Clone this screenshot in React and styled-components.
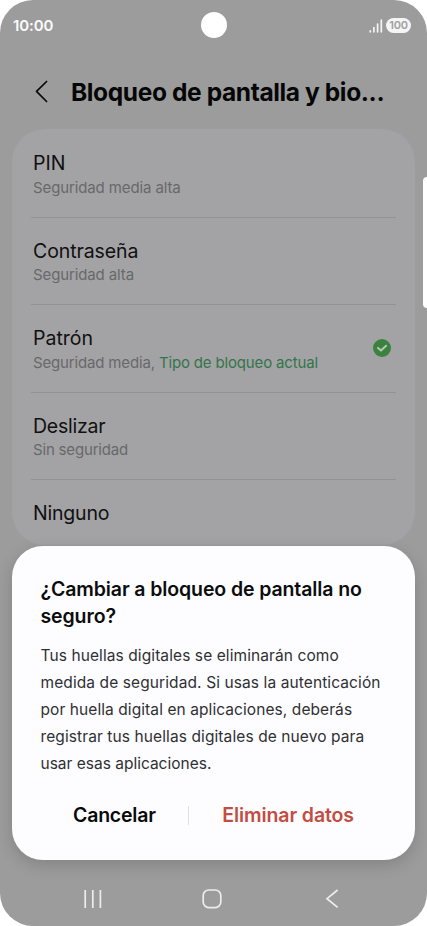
import styled, { createGlobalStyle } from "styled-components";

const options = [
  { name: "PIN", detail: "Seguridad media alta", nameTrack: 0, track: -0.12 },
  { name: "Contraseña", detail: "Seguridad alta", nameTrack: -0.1, track: -0.12 },
  {
    name: "Patrón",
    detail: "Seguridad media, ",
    current: "Tipo de bloqueo actual",
    nameTrack: 0,
    track: -0.16,
  },
  { name: "Deslizar", detail: "Sin seguridad", nameTrack: -0.25, track: -0.18 },
  { name: "Ninguno", nameTrack: -0.2 },
];

const message = [
  { text: "Tus huellas digitales se eliminarán como", track: 0.09 },
  { text: "medida de seguridad. Si usas la autenticación", track: 0.1 },
  { text: "por huella digital en aplicaciones, deberás", track: 0.08 },
  { text: "registrar tus huellas digitales de nuevo para", track: 0.1 },
  { text: "usar esas aplicaciones.", track: 0 },
];

export default function App() {
  return (
    <>
      <GlobalStyle />
      <Phone>
        <StatusBar>
          <Time>10:00</Time>
          <Camera />
          <StatusIcons>
            <svg width="14" height="14" viewBox="0 0 14 14">
              <path
                d="M1.3 11.8v1M4.9 8.6v4.2M8.6 5.2v7.6M12.3 1.2v11.6"
                stroke="#f5f5f5"
                strokeWidth="1.7"
                strokeLinecap="round"
              />
            </svg>
            <Battery>100</Battery>
          </StatusIcons>
        </StatusBar>
        <Header>
          <svg width="14" height="24" viewBox="0 0 14 24" fill="none">
            <path
              d="M11.6 1.5L1.5 11.4L11.6 21.5"
              stroke="#090909"
              strokeWidth="1.7"
              strokeLinecap="round"
              strokeLinejoin="round"
            />
          </svg>
          <Title>Bloqueo de pantalla y bio...</Title>
        </Header>
        <List>
          {options.map((option) => (
            <Row key={option.name}>
              <div>
                <Name $track={option.nameTrack}>{option.name}</Name>
                {option.detail && (
                  <Detail $track={option.track}>
                    {option.detail}
                    {option.current && <Current>{option.current}</Current>}
                  </Detail>
                )}
              </div>
              {option.current && (
                <svg width="18" height="18" viewBox="0 0 18 18" fill="none">
                  <circle cx="9" cy="9" r="9" fill="#3b823f" />
                  <path
                    d="M5 8.9L8 11.6L13.1 6.8"
                    stroke="#b2c6b4"
                    strokeWidth="2"
                    strokeLinecap="round"
                    strokeLinejoin="round"
                  />
                </svg>
              )}
            </Row>
          ))}
        </List>
        <Dialog>
          <Question>
            ¿Cambiar a bloqueo de pantalla no
            <br />
            seguro?
          </Question>
          <Message>
            {message.map((line) => (
              <Line key={line.text} $track={line.track}>
                {line.text}
              </Line>
            ))}
          </Message>
          <Actions>
            <Action $width={148}>Cancelar</Action>
            <Divider />
            <Action $width={198} $danger>
              Eliminar datos
            </Action>
          </Actions>
        </Dialog>
        <NavBar>
          <svg width="20" height="20" viewBox="0 0 20 20">
            <path d="M2.2 1v18M9.8 1v18M17.4 1v18" stroke="#ededed" strokeWidth="1.7" />
          </svg>
          <svg width="20" height="20" viewBox="0 0 20 20" fill="none">
            <rect
              x="1.2"
              y="1"
              width="17.6"
              height="17.6"
              rx="5.6"
              stroke="#ededed"
              strokeWidth="1.7"
            />
          </svg>
          <svg width="20" height="20" viewBox="0 0 20 20" fill="none">
            <path d="M16.6 1L6 9.7L16.6 18.4" stroke="#ededed" strokeWidth="1.7" />
          </svg>
        </NavBar>
        <EdgeHandle />
      </Phone>
    </>
  );
}

const GlobalStyle = createGlobalStyle`
  * {
    box-sizing: border-box;
  }
  body {
    margin: 0;
    background: #ffffff;
    font-family: "Inter", "Liberation Sans", sans-serif;
  }
  svg {
    display: block;
    flex: none;
  }
  h1, h2, p {
    margin: 0;
  }
`;

const Phone = styled.div`
  position: relative;
  display: flex;
  flex-direction: column;
  width: 427px;
  height: 926px;
  overflow: hidden;
  border-radius: 33px;
  background: #9c9c9c;
`;

const StatusBar = styled.div`
  display: grid;
  grid-template-columns: 1fr 27px 1fr;
  align-items: center;
  height: 50px;
  padding: 1px 16px 0 13px;
`;

const Time = styled.span`
  font-size: 15px;
  font-weight: 600;
  letter-spacing: -0.1px;
  color: #fafafa;
`;

const Camera = styled.span`
  width: 26px;
  height: 26px;
  margin: 0 0 1px 2px;
  border-radius: 50%;
  background: #ffffff;
`;

const StatusIcons = styled.div`
  display: flex;
  justify-content: flex-end;
  align-items: center;
  gap: 3px;
`;

const Battery = styled.span`
  width: 25px;
  height: 15px;
  border-radius: 8px;
  background: #f5f5f5;
  color: #a0a0a0;
  font-size: 11px;
  font-weight: 600;
  line-height: 15px;
  text-align: center;
  letter-spacing: -0.2px;
`;

const Header = styled.header`
  display: flex;
  align-items: center;
  gap: 22px;
  height: 79px;
  padding: 4px 0 0 35px;
`;

const Title = styled.h1`
  padding-top: 1px;
  font-size: 24.5px;
  font-weight: 700;
  letter-spacing: -0.38px;
  white-space: nowrap;
  color: #060606;
`;

const List = styled.div`
  flex: none;
  width: 403px;
  height: 416px;
  margin-left: 12px;
  padding: 1px 19px 0;
  border-radius: 33px;
  background: #a3a3a5;
`;

const Row = styled.div`
  display: flex;
  justify-content: space-between;
  height: 87.5px;
  padding: 20px 5px 0 2px;
  border-bottom: 1px solid #939395;

  svg {
    margin-top: 14px;
  }
  &:last-child {
    height: 65px;
    border-bottom: 0;
  }
`;

const Name = styled.div`
  font-size: 19.5px;
  line-height: 26px;
  letter-spacing: ${(props) => props.$track}px;
  color: #101011;
`;

const Detail = styled.div`
  margin-top: -0.5px;
  font-size: 15px;
  line-height: 23px;
  letter-spacing: ${(props) => props.$track}px;
  white-space: nowrap;
  color: #68686a;
`;

const Current = styled.span`
  color: #34744a;
`;

const Dialog = styled.section`
  flex: none;
  width: 403px;
  height: 313.5px;
  margin: 1px 0 0 12px;
  padding: 30px 28px 0 28.5px;
  border-radius: 31px;
  background: #fdfdff;
  box-shadow: 0 5px 16px rgba(0, 0, 0, 0.16);
`;

const Question = styled.h2`
  font-size: 19.5px;
  font-weight: 600;
  line-height: 27px;
  letter-spacing: -0.11px;
  white-space: nowrap;
  color: #0c0c0d;
`;

const Message = styled.p`
  display: flex;
  flex-direction: column;
  margin-top: 12px;
  font-size: 15.5px;
  line-height: 27px;
  white-space: nowrap;
  color: #303033;
`;

const Line = styled.span`
  letter-spacing: ${(props) => props.$track}px;
`;

const Actions = styled.div`
  display: flex;
  align-items: center;
  height: 28px;
  margin-top: 24px;
`;

const Action = styled.button`
  width: ${(props) => props.$width}px;
  padding: 0;
  border: 0;
  background: none;
  font-family: inherit;
  font-size: 19.5px;
  font-weight: 600;
  letter-spacing: ${(props) => (props.$danger ? "-0.1px" : "-0.2px")};
  white-space: nowrap;
  color: ${(props) => (props.$danger ? "#c24d42" : "#09090a")};
`;

const Divider = styled.span`
  width: 1px;
  height: 19px;
  background: #e1e1e4;
`;

const NavBar = styled.nav`
  display: flex;
  justify-content: space-between;
  padding: 29px 86px 0 83px;
`;

/* pull tab that sits over the right edge of the screen */
const EdgeHandle = styled.span`
  position: absolute;
  top: 177px;
  right: 0;
  width: 4px;
  height: 131px;
  border-radius: 4px 0 0 4px;
  background: #ffffff;
`;
